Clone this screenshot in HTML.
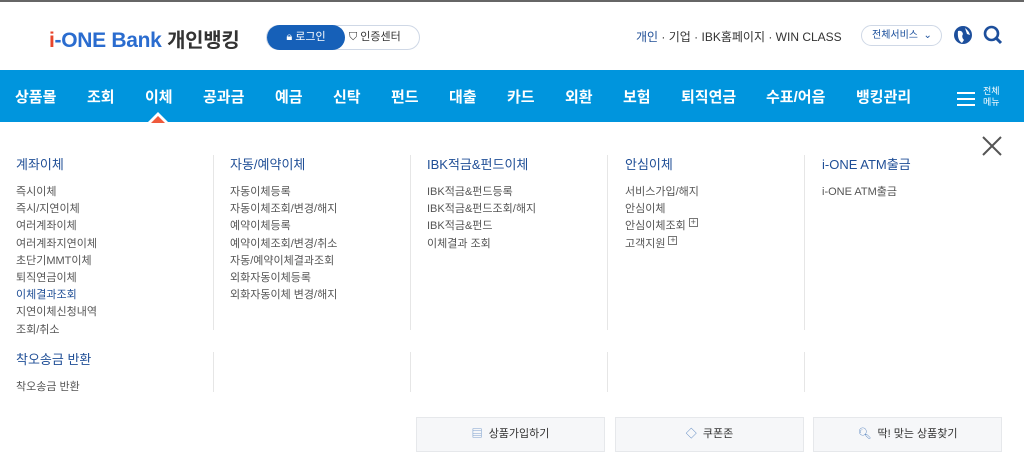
<!DOCTYPE html>
<html><head><meta charset="utf-8"><style>
*{margin:0;padding:0;box-sizing:border-box}
body{width:1024px;height:470px;overflow:hidden;background:#fff;font-family:"Liberation Sans","Noto Sans CJK KR",sans-serif;position:relative}
.abs{position:absolute}
.topline{left:0;top:0;width:1024px;height:2px;background:#666}
.logo{left:49px;top:24px;font-size:21px;font-weight:bold;color:#2a6ccf;letter-spacing:-0.3px;white-space:nowrap}
.logo .kr{color:#333;font-size:20px}
.logo .i{color:#e8452c}
.pill{left:266px;top:25px;width:154px;height:25px;border:1px solid #cfd8e6;border-radius:13px}
.pill .l{position:absolute;left:0;top:-1px;width:78px;height:25px;background:#1660b8;border-radius:13px;color:#fff;font-size:11px;line-height:25px;text-align:center}
.pill .r{position:absolute;left:82px;top:0;font-size:11px;line-height:23px;color:#333}
.util{top:28px;font-size:12px;color:#333;white-space:nowrap}
.svc{left:861px;top:25px;width:81px;height:21px;border:1px solid #cfd8e6;border-radius:11px;font-size:10px;color:#1a4f9c;line-height:19px;padding-left:10px}
.nav{left:0;top:70px;width:1024px;height:52px;background:#0095dd}
.nav span{position:absolute;top:16px;color:#fff;font-size:15px;font-weight:bold;white-space:nowrap}
.col{position:absolute;font-size:11px;color:#555;line-height:17.2px}
.col h3{font-size:13px;color:#1f4e96;font-weight:normal;margin-bottom:10px;line-height:18px}
.div{position:absolute;width:1px;background:#e6e6e6}
.box{position:absolute;display:inline-block;width:9px;height:9px;border:1px solid #777;font-size:9px;line-height:7px;text-align:center;vertical-align:middle;margin-left:3px}
.btn{position:absolute;top:417px;width:189px;height:35px;background:#f6f7f9;border:1px solid #e6e8eb;font-size:11px;color:#333;text-align:center;line-height:33px}
</style></head><body>
<div class="abs topline"></div>
<div class="abs logo"><span class="i">i</span>-ONE Bank <span class="kr">개인뱅킹</span></div>
<div class="abs pill"><div class="l">🔒︎ 로그인</div><div class="r">⛉ 인증센터</div></div>
<div class="abs util" style="left:636px"><span style="color:#1f4e96">개인</span> · 기업 · IBK홈페이지 · WIN CLASS</div>
<div class="abs svc">전체서비스 &nbsp;⌄</div>
<svg class="abs" style="left:953px;top:25px" width="20" height="20"><circle cx="10" cy="10" r="9" fill="#1d4f9c"/><path d="M5 6 Q9 5 10 9 Q8 12 11 15 L9 18 Q4 15 5 6Z M12 3 Q16 6 17 10 L14 9Z" fill="#fff"/></svg>
<svg class="abs" style="left:983px;top:25px" width="20" height="20"><circle cx="8.5" cy="8.5" r="6.5" fill="none" stroke="#1d4f9c" stroke-width="2.6"/><path d="M13 13 L18 18" stroke="#1d4f9c" stroke-width="3"/></svg>
<div class="abs nav">
<span style="left:15px">상품몰</span><span style="left:87px">조회</span><span style="left:145px">이체</span><span style="left:203px">공과금</span><span style="left:275px">예금</span><span style="left:333px">신탁</span><span style="left:391px">펀드</span><span style="left:449px">대출</span><span style="left:507px">카드</span><span style="left:565px">외환</span><span style="left:623px">보험</span><span style="left:681px">퇴직연금</span><span style="left:766px">수표/어음</span><span style="left:856px">뱅킹관리</span>
<svg style="position:absolute;left:957px;top:22px" width="18" height="14"><path d="M0 1H18M0 7H18M0 13H18" stroke="#fff" stroke-width="2"/></svg>
<div style="position:absolute;left:983px;top:16px;color:#fff;font-size:9px;line-height:11px">전체<br>메뉴</div>
</div>
<svg class="abs" style="left:147px;top:111px" width="22" height="12"><path d="M0 12 L11 1 L22 12Z" fill="#fff"/><path d="M4 12 L11 5 L18 12Z" fill="#ef5a3c"/></svg>
<svg class="abs" style="left:982px;top:136px" width="20" height="20"><path d="M1 1L19 19M19 1L1 19" stroke="#555" stroke-width="2"/></svg>
<div class="div" style="left:213px;top:155px;height:175px"></div>
<div class="div" style="left:410px;top:155px;height:175px"></div>
<div class="div" style="left:607px;top:155px;height:175px"></div>
<div class="div" style="left:804px;top:155px;height:175px"></div>
<div class="div" style="left:213px;top:352px;height:40px"></div>
<div class="div" style="left:410px;top:352px;height:40px"></div>
<div class="div" style="left:607px;top:352px;height:40px"></div>
<div class="div" style="left:804px;top:352px;height:40px"></div>
<div class="col" style="left:16px;top:156px"><h3>계좌이체</h3>즉시이체<br>즉시/지연이체<br>여러계좌이체<br>여러계좌지연이체<br>초단기MMT이체<br>퇴직연금이체<br><span style="color:#1f4e96">이체결과조회</span><br>지연이체신청내역<br>조회/취소</div>
<div class="col" style="left:230px;top:156px"><h3>자동/예약이체</h3>자동이체등록<br>자동이체조회/변경/해지<br>예약이체등록<br>예약이체조회/변경/취소<br>자동/예약이체결과조회<br>외화자동이체등록<br>외화자동이체 변경/해지</div>
<div class="col" style="left:427px;top:156px"><h3>IBK적금&amp;펀드이체</h3>IBK적금&amp;펀드등록<br>IBK적금&amp;펀드조회/해지<br>IBK적금&amp;펀드<br>이체결과 조회</div>
<div class="col" style="left:625px;top:156px"><h3>안심이체</h3>서비스가입/해지<br>안심이체<br>안심이체조회<span class="box">+</span><br>고객지원<span class="box">+</span></div>
<div class="col" style="left:822px;top:156px"><h3>i-ONE ATM출금</h3>i-ONE ATM출금</div>
<div class="col" style="left:16px;top:351px"><h3>착오송금 반환</h3>착오송금 반환</div>
<div class="btn" style="left:416px"><span style="color:#5a86c0">▤</span>&nbsp; 상품가입하기</div>
<div class="btn" style="left:615px"><span style="color:#5a86c0">◇</span>&nbsp; 쿠폰존</div>
<div class="btn" style="left:813px"><span style="color:#5a86c0">🔍︎</span>&nbsp; 딱! 맞는 상품찾기</div>
</body></html>
